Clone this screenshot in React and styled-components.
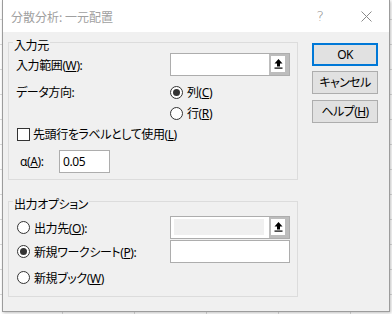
import React from 'react';
import styled, { createGlobalStyle } from 'styled-components';

const Global = createGlobalStyle`
  html, body { margin: 0; padding: 0; }
  body {
    font-family: "Noto Sans", "Noto Sans CJK JP", sans-serif;
    font-size: 12px;
    color: #000;
    font-feature-settings: "palt";
    letter-spacing: -0.4px;
  }
`;

const Desk = styled.div`
  width: 392px;
  height: 314px;
  overflow: hidden;
  background-color: #fff;
  background-image:
    linear-gradient(to right, #dadada 1px, transparent 1px),
    linear-gradient(to bottom, #dadada 1px, transparent 1px);
  background-size: 72px 100%, 100% 25px;
  background-position: 62px 0, 0 19px;
`;

const Dialog = styled.div`
  margin-left: 2px;
  width: 388px;
  height: 312px;
  box-sizing: border-box;
  background: #f0f0f0;
  border: 1px solid #9c9c9c;
  border-top: none;
  box-shadow: 1px 1px 3px rgba(0, 0, 0, 0.25);
  display: flex;
  flex-direction: column;
`;

const TitleBar = styled.div`
  height: 32px;
  flex: none;
  background: #fff;
  display: flex;
  align-items: center;
  padding-left: 8px;
  color: #a0a0a0;
`;

const TitleText = styled.span`
  flex: 1;
  font-family: "Noto Sans CJK JP", sans-serif;
  font-feature-settings: normal;
  letter-spacing: 0;
`;

const CaptionButton = styled.span`
  width: 46px;
  height: 32px;
  display: flex;
  align-items: center;
  justify-content: center;
  color: #8a8a8a;
  font-size: 14px;
  font-family: "DejaVu Sans", sans-serif;
  font-weight: 300;
`;

const Body = styled.div`
  flex: 1;
  display: flex;
  padding-left: 5px;
`;

const LeftCol = styled.div`
  width: 290px;
  display: flex;
  flex-direction: column;
`;

const RightCol = styled.div`
  margin-left: 14px;
  padding-top: 11px;
  width: 66px;
  display: flex;
  flex-direction: column;
`;

const Group = styled.fieldset`
  margin: ${p => p.$mt || 0}px 0 0 0;
  padding: ${p => p.$pt || 0}px 7px ${p => p.$pb || 0}px 7px;
  border: 1px solid #dcdcdc;
  min-width: 0;
  box-sizing: border-box;
`;

const Legend = styled.legend`
  padding: 5px 1px 0;
  margin-left: -3px;
  line-height: 16px;
  font-family: "Noto Sans CJK JP", sans-serif;
`;

const FieldRow = styled.div`
  display: grid;
  grid-template-columns: 154px 120px;
  align-items: center;
  height: ${p => p.$h || 23}px;
  margin-top: ${p => p.$mt || 0}px;
`;

const Row = styled.div`
  display: flex;
  align-items: center;
  height: ${p => p.$h || 20}px;
  margin-top: ${p => p.$mt || 0}px;
  padding-left: ${p => p.$pl || 0}px;
`;

const AlphaRow = styled.div`
  display: grid;
  grid-template-columns: 43px 51px;
  align-items: center;
  height: 23px;
  margin-top: ${p => p.$mt || 0}px;
`;

const Label = styled.span`
  white-space: nowrap;
  padding-left: ${p => p.$pl || 0}px;
`;

const Choice = styled.label`
  display: flex;
  align-items: center;
  gap: ${p => p.$gap ?? 4}px;
  white-space: nowrap;
`;

const RadioCircle = styled.span`
  width: 13px;
  height: 13px;
  box-sizing: border-box;
  border: 1px solid #333;
  border-radius: 50%;
  background: #fff;
  display: inline-flex;
  align-items: center;
  justify-content: center;
  flex: none;
  &::after {
    content: '';
    width: 7px;
    height: 7px;
    border-radius: 50%;
    background: ${p => (p.$checked ? '#333' : 'transparent')};
  }
`;

const CheckBox = styled.span`
  width: 13px;
  height: 13px;
  box-sizing: border-box;
  border: 1px solid #333;
  background: #fff;
  flex: none;
`;

const TextBox = styled.div`
  height: 23px;
  box-sizing: border-box;
  border: 1px solid #adadad;
  background: #fff;
  display: flex;
  align-items: center;
  padding-left: 3px;
`;

const RefBox = styled.div`
  height: 23px;
  box-sizing: border-box;
  border: 1px solid #adadad;
  background: #fff;
  display: flex;
`;

const RefField = styled.div`
  flex: 1;
  padding: 2px 5px 3px 3px;
  display: flex;
`;

const DisabledFill = styled.div`
  flex: 1;
  background: #f0f0f0;
`;

const RefButton = styled.div`
  width: 20px;
  box-sizing: border-box;
  background: #bdbdbd;
  padding: 2px 4px 3px 2px;
  display: flex;
`;

const RefFace = styled.div`
  flex: 1;
  background: #fff;
  display: flex;
  align-items: center;
  justify-content: center;
`;

const Btn = styled.button`
  width: 66px;
  height: 23px;
  box-sizing: border-box;
  margin: ${p => p.$mt || 0}px 0 0 0;
  padding: 0;
  background: #e1e1e1;
  border: ${p => (p.$default ? '2px solid #0078d7' : '1px solid #adadad')};
  font: inherit;
  font-family: "Noto Sans", "Noto Sans CJK JP", sans-serif;
  font-feature-settings: "palt";
  letter-spacing: -0.6px;
  color: #000;
  display: flex;
  align-items: center;
  justify-content: center;
  line-height: 1;
`;

const UpArrow = () => (
  <svg width="9" height="10" viewBox="0 0 9 10">
    <polygon points="4.5,0 8.5,4.5 6,4.5 6,7.5 3,7.5 3,4.5 0.5,4.5" fill="#000" />
    <rect x="0.5" y="8.5" width="8" height="1.2" fill="#000" />
  </svg>
);

const CloseGlyph = () => (
  <svg width="11" height="11" viewBox="0 0 11 11">
    <path d="M0.5 0.5 L10.5 10.5 M10.5 0.5 L0.5 10.5" stroke="#8a8a8a" strokeWidth="1" fill="none" />
  </svg>
);

const RefInput = ({ disabled }) => (
  <RefBox>
    <RefField>{disabled ? <DisabledFill /> : null}</RefField>
    <RefButton>
      <RefFace>
        <UpArrow />
      </RefFace>
    </RefButton>
  </RefBox>
);

export default function App() {
  return (
    <>
      <Global />
      <Desk lang="ja">
        <Dialog>
          <TitleBar>
            <TitleText>分散分析: 一元配置</TitleText>
            <CaptionButton>?</CaptionButton>
            <CaptionButton>
              <CloseGlyph />
            </CaptionButton>
          </TitleBar>
          <Body>
            <LeftCol>
              <Group $pb={6}>
                <Legend>入力元</Legend>
                <FieldRow>
                  <Label>入力範囲(<u>W</u>):</Label>
                  <RefInput />
                </FieldRow>
                <FieldRow $mt={5} $h={22}>
                  <Label>データ方向:</Label>
                  <Choice>
                    <RadioCircle $checked />
                    <span>列(<u>C</u>)</span>
                  </Choice>
                </FieldRow>
                <FieldRow $h={20}>
                  <span />
                  <Choice>
                    <RadioCircle />
                    <span>行(<u>R</u>)</span>
                  </Choice>
                </FieldRow>
                <Row $mt={1} $pl={1}>
                  <Choice $gap={3}>
                    <CheckBox />
                    <span>先頭行をラベルとして使用(<u>L</u>)</span>
                  </Choice>
                </Row>
                <AlphaRow $mt={6}>
                  <Label $pl={4}>α(<u>A</u>):</Label>
                  <TextBox>0.05</TextBox>
                </AlphaRow>
              </Group>
              <Group $mt={11} $pt={4} $pb={8}>
                <Legend>出力オプション</Legend>
                <FieldRow>
                  <Row $pl={1}>
                    <Choice>
                      <RadioCircle />
                      <span>出力先(<u>O</u>):</span>
                    </Choice>
                  </Row>
                  <RefInput disabled />
                </FieldRow>
                <FieldRow $mt={1}>
                  <Row $pl={1}>
                    <Choice>
                      <RadioCircle $checked />
                      <span>新規ワークシート(<u>P</u>):</span>
                    </Choice>
                  </Row>
                  <TextBox />
                </FieldRow>
                <Row $mt={4} $h={21} $pl={1}>
                  <Choice>
                    <RadioCircle />
                    <span>新規ブック(<u>W</u>)</span>
                  </Choice>
                </Row>
              </Group>
            </LeftCol>
            <RightCol>
              <Btn $default>OK</Btn>
              <Btn $mt={5}>キャンセル</Btn>
              <Btn $mt={6}>ヘルプ(<u>H</u>)</Btn>
            </RightCol>
          </Body>
        </Dialog>
      </Desk>
    </>
  );
}
